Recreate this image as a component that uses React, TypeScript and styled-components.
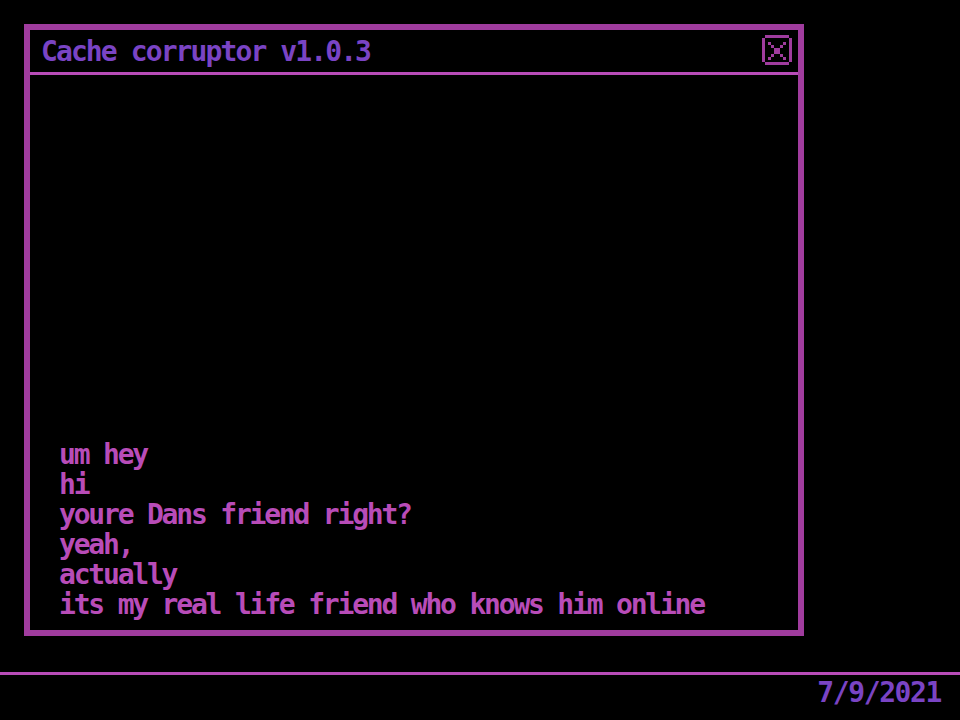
import styled, { createGlobalStyle } from "styled-components";

const GlobalStyle = createGlobalStyle`
  html, body {
    margin: 0;
    padding: 0;
    background: #000000;
  }
  body {
    font-family: "DejaVu Sans Mono", "Liberation Mono", monospace;
    font-weight: bold;
  }
`;

const Screen = styled.div`
  width: 960px;
  height: 720px;
  display: flex;
  flex-direction: column;
  background: #000000;
  overflow: hidden;
`;

const Desktop = styled.div`
  flex: 1;
  padding: 24px 0 0 24px;
`;

const Window = styled.div`
  width: 780px;
  height: 612px;
  box-sizing: border-box;
  border: 6px solid #a03c9e;
  display: flex;
  flex-direction: column;
`;

const TitleBar = styled.div`
  height: 42px;
  border-bottom: 3px solid #b84cb8;
  display: flex;
  align-items: center;
  justify-content: space-between;
  padding: 0 6px 0 11px;
`;

const Title = styled.span`
  color: #7a44c4;
  font-size: 28px;
  letter-spacing: -1.9px;
  line-height: 1;
  margin-top: 2px;
`;

const CloseButton = styled.button`
  width: 30px;
  height: 30px;
  padding: 0;
  border: 0;
  background: none;
  display: flex;
  margin-top: -2px;
`;

const Log = styled.div`
  flex: 1;
  display: flex;
  flex-direction: column;
  justify-content: flex-end;
  padding: 0 0 10px 29px;
`;

const Line = styled.div`
  color: #b84cb8;
  font-size: 28px;
  letter-spacing: -2.2px;
  line-height: 30px;
  white-space: pre;
`;

const Taskbar = styled.div`
  height: 45px;
  border-top: 3px solid #b84cb8;
  display: flex;
  justify-content: flex-end;
  align-items: flex-start;
  padding-right: 19px;
`;

const Clock = styled.span`
  color: #7a44c4;
  font-size: 28px;
  letter-spacing: -1.4px;
  line-height: 30px;
  margin-top: 3px;
`;

const CloseIcon = () => (
  <svg width="30" height="30" viewBox="0 0 30 30" shapeRendering="crispEdges">
    <g fill="#a03c9e">
      <rect x="3" y="0" width="24" height="3" />
      <rect x="3" y="27" width="24" height="3" />
      <rect x="0" y="3" width="3" height="24" />
      <rect x="27" y="3" width="3" height="24" />
      <rect x="6" y="7" width="3" height="3" />
      <rect x="9" y="10" width="3" height="3" />
      <rect x="21" y="7" width="3" height="3" />
      <rect x="18" y="10" width="3" height="3" />
      <rect x="12" y="13" width="6" height="6" />
      <rect x="9" y="19" width="3" height="3" />
      <rect x="6" y="22" width="3" height="3" />
      <rect x="18" y="19" width="3" height="3" />
      <rect x="21" y="22" width="3" height="3" />
    </g>
  </svg>
);

const messages = [
  "um hey",
  "hi",
  "youre Dans friend right?",
  "yeah,",
  "actually",
  "its my real life friend who knows him online",
];

export default function App() {
  return (
    <Screen>
      <GlobalStyle />
      <Desktop>
        <Window>
          <TitleBar>
            <Title>Cache corruptor v1.0.3</Title>
            <CloseButton aria-label="close">
              <CloseIcon />
            </CloseButton>
          </TitleBar>
          <Log>
            {messages.map((m) => (
              <Line key={m}>{m}</Line>
            ))}
          </Log>
        </Window>
      </Desktop>
      <Taskbar>
        <Clock>7/9/2021</Clock>
      </Taskbar>
    </Screen>
  );
}
